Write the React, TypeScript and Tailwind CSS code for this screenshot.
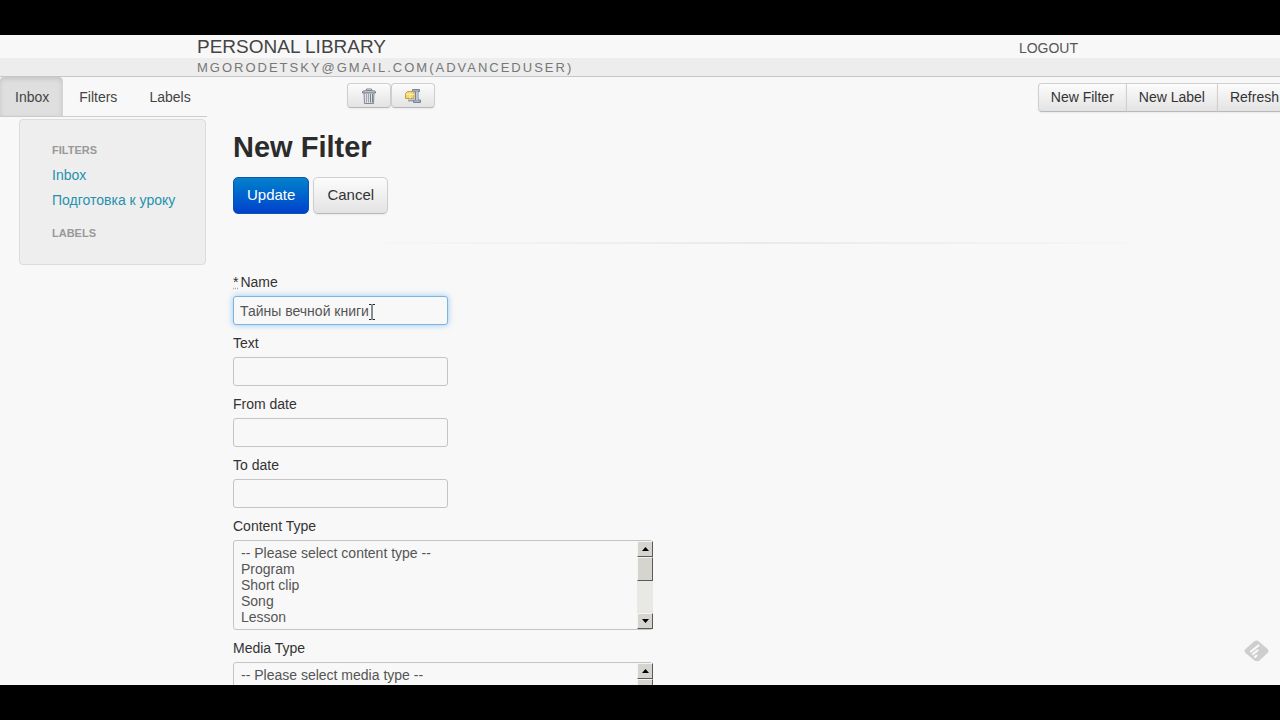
import type { ReactNode } from "react";

const TABS = ["Inbox", "Filters", "Labels"];
const FILTERS = ["Inbox", "Подготовка к уроку"];
const ACTIONS = ["New Filter", "New Label", "Refresh"];

const CONTENT_TYPES = ["-- Please select content type --", "Program", "Short clip", "Song", "Lesson"];
const MEDIA_TYPES = ["-- Please select media type --"];

const silverButton =
  "border border-[#cfcfcf] border-b-[#b8b8b8] bg-linear-to-b from-[#fcfcfc] to-[#e3e3e3] text-[#333] shadow-[0_1px_2px_rgba(0,0,0,0.06)]";

function TrashIcon() {
  return (
    <svg width="16" height="16" viewBox="0 0 16 16" fill="none" aria-hidden="true">
      <path d="M5.5 2.5V1h5v1.5" stroke="#7c8088" />
      <path d="M1.500 5V3.500C1.500 2.200 14.500 2.200 14.500 3.500V5z" fill="#c3c7cf" stroke="#7c8088" />
      <path d="M3 5h10l-.5 10.500h-9z" fill="#dde0e7" stroke="#858992" />
      <path d="M5.5 6v8.500M7.500 6v8.500" stroke="#a0a4ad" />
      <path d="M9.500 6v8.500M11.500 6v8.500" stroke="#7c808a" />
    </svg>
  );
}

function ArchiveIcon() {
  return (
    <svg width="18" height="16" viewBox="0 0 18 16" fill="none" aria-hidden="true">
      <path d="M8.500 1.500h7v2h-1.500v8.500h2.500v2.500h-7V12h2V3.500h-3z" fill="#a5afc3" stroke="#78829a" />
      <path d="M13 4v8" stroke="#dce2ee" />
      <path d="M1.500 5.500l2-2h6.500v7H1.500z" fill="#f3d568" stroke="#c0a048" />
      <path d="M2 6.500h8M6 4v6.500" stroke="#fff1a8" />
      <path d="M4 12.500h5" stroke="#9aa4b8" strokeWidth="2" />
    </svg>
  );
}

function ArrowButton({ down = false }: { down?: boolean }) {
  return (
    <span className="flex h-4 w-4 shrink-0 items-center justify-center border border-t-[#f4f4f0] border-r-[#5a5a5a] border-b-[#5a5a5a] border-l-[#f4f4f0] bg-[#d6d4ce]">
      <svg width="7" height="4" viewBox="0 0 7 4" aria-hidden="true">
        <path d={down ? "M0 0h7L3.5 4z" : "M0 4h7L3.5 0z"} fill="#000" />
      </svg>
    </span>
  );
}

function ListBox({ id, label, options }: { id: string; label: string; options: string[] }) {
  return (
    <Field id={id} label={label}>
      <div className="relative w-full max-w-[420px]">
        <select
          id={id}
          size={5}
          className="block h-[90px] w-full overflow-y-scroll rounded-[3px] border border-[#c4c4c4] bg-[#f8f8f8] px-[5px] py-1 text-sm text-[#555] outline-none [scrollbar-width:none]"
        >
          {options.map((option) => (
            <option key={option} className="h-4 min-h-0 px-0.5 py-0 leading-4">
              {option}
            </option>
          ))}
        </select>
        <div className="pointer-events-none absolute inset-y-px right-0 flex w-4 flex-col bg-[#e8e8e4]">
          <ArrowButton />
          <span className="h-6 w-4 shrink-0 border border-t-[#f4f4f0] border-r-[#5a5a5a] border-b-[#5a5a5a] border-l-[#f4f4f0] bg-[#d6d4ce]" />
          <span className="flex-1" />
          <ArrowButton down />
        </div>
      </div>
    </Field>
  );
}

function Field({ id, label, required, children }: { id: string; label: string; required?: boolean; children: ReactNode }) {
  return (
    <div className="mb-2 flex flex-col gap-1">
      <label htmlFor={id} className="text-sm leading-5 text-[#333]">
        {required && <abbr title="required" className="mr-0.5 underline decoration-[#aaa] decoration-dotted">*</abbr>}
        {label}
      </label>
      {children}
    </div>
  );
}

function TextField({ id, label }: { id: string; label: string }) {
  return (
    <Field id={id} label={label}>
      <input
        id={id}
        type="text"
        className="h-[29px] w-[215px] rounded-[3px] border border-[#c4c4c4] bg-[#f8f8f8] px-1.5 text-sm text-[#555]"
      />
    </Field>
  );
}

function Header() {
  return (
    <header className="shrink-0 border-b border-[#c6c6c6] bg-linear-to-b from-[#f8f8f8] from-[23px] to-[#ededed] to-[23px]">
      <div className="mx-auto flex w-full max-w-[886px] items-start justify-between">
        <div>
          <h1 className="text-[19px] leading-[23px] text-[#444]">PERSONAL LIBRARY</h1>
          <p className="h-[18px] text-[13px] leading-5 tracking-[2px] text-[#777]">MGORODETSKY@GMAIL.COM(ADVANCEDUSER)</p>
        </div>
        <a href="#logout" className="pr-[5px] text-sm leading-[27px] text-[#555]">LOGOUT</a>
      </div>
    </header>
  );
}

function Toolbar() {
  return (
    <div className="flex shrink-0 items-start">
      <nav className="mr-[140px] flex w-[207px] shrink-0 border-b border-[#ccc]">
        {TABS.map((tab, i) => (
          <a
            key={tab}
            href={"#" + tab.toLowerCase()}
            className={
              i === 0
                ? "rounded-t border-r border-[#d5d5d5] bg-[#dfdfdf] pt-0.5 pr-[13px] pl-[15px] text-sm leading-[37px] text-[#444] shadow-[inset_0_2px_5px_rgba(0,0,0,0.12)]"
                : "px-4 pt-0.5 text-sm leading-[37px] text-[#444]"
            }
          >
            {tab}
          </a>
        ))}
      </nav>
      <div className="mt-1.5 flex">
        <button aria-label="Delete" className={"flex h-[25px] w-11 items-center justify-center rounded " + silverButton}>
          <TrashIcon />
        </button>
        <button aria-label="Archive" className={"flex h-[25px] w-11 items-center justify-center rounded " + silverButton}>
          <ArchiveIcon />
        </button>
      </div>
      <div className="mt-1.5 -mr-3 ml-auto flex shrink-0">
        {ACTIONS.map((action) => (
          <button key={action} className={"-ml-px h-[29px] px-3 pb-0.5 text-sm first:rounded-l last:rounded-r " + silverButton}>
            {action}
          </button>
        ))}
      </div>
    </div>
  );
}

function Sidebar() {
  return (
    <aside className="mt-0.5 ml-[19px] w-[187px] shrink-0 self-start rounded border border-[#dcdcdc] bg-[#eee] px-8 pt-[19px] pb-5">
      <h2 className="mb-0.5 text-[11px] leading-[22px] font-bold text-[#999]">FILTERS</h2>
      <ul>
        {FILTERS.map((filter) => (
          <li key={filter}>
            <a href="#filter" className="block text-sm leading-[25px] whitespace-nowrap text-[#2591ae]">{filter}</a>
          </li>
        ))}
      </ul>
      <h2 className="mt-[9px] text-[11px] leading-[22px] font-bold text-[#999]">LABELS</h2>
    </aside>
  );
}

function FilterForm() {
  return (
    <main className="ml-[27px] min-w-0 flex-1 pt-3">
      <h2 className="text-[29px] leading-9 font-bold text-[#2b2b2b]">New Filter</h2>
      <form>
        <div className="mt-3 flex gap-1">
          <button
            type="button"
            className="h-[37px] rounded-[5px] border border-[#0a55b0] bg-linear-to-b from-[#0a80cc] to-[#0440cc] px-[13px] pb-px text-[15px] text-white"
          >
            Update
          </button>
          <button type="button" className={"h-[37px] rounded-[5px] px-[13px] pb-px text-[15px] " + silverButton}>
            Cancel
          </button>
        </div>
        <hr className="mx-auto my-7 h-0.5 w-[71%] border-0 bg-linear-to-r from-[#f6f6f6] via-[#eaeaea] to-[#f6f6f6]" />
        <Field id="name" label="Name" required>
          <div className="relative">
            <input
              id="name"
              type="text"
              defaultValue="Тайны вечной книги"
              className="block h-[29px] w-[215px] rounded-[3px] border border-[#7db3e0] bg-[#f8f8f8] px-1.5 text-sm text-[#555] shadow-[0_0_6px_rgba(82,168,236,0.6)] outline-none"
            />
            <svg className="pointer-events-none absolute top-2 left-[135px]" width="8" height="16" viewBox="0 0 8 16" aria-hidden="true">
              <path d="M1 .5h2.5M4.5 .5H7M4 1v14M1 15.5h2.5M4.5 15.5H7" stroke="#222" fill="none" />
            </svg>
          </div>
        </Field>
        <TextField id="text" label="Text" />
        <TextField id="from-date" label="From date" />
        <TextField id="to-date" label="To date" />
        <ListBox id="content-type" label="Content Type" options={CONTENT_TYPES} />
        <ListBox id="media-type" label="Media Type" options={MEDIA_TYPES} />
      </form>
    </main>
  );
}

export default function App() {
  return (
    <div className="h-screen bg-black py-[35px] font-['Liberation_Sans',Arial,sans-serif]">
      <div className="relative flex h-full flex-col overflow-hidden bg-[#f8f8f8]">
        <Header />
        <Toolbar />
        <div className="flex min-h-0 flex-1">
          <Sidebar />
          <FilterForm />
        </div>
        <svg className="absolute right-[11px] bottom-[23px]" width="25" height="22" viewBox="0 0 25 22" aria-hidden="true">
          <path d="M10 1.5q2.5-2 5 0l8.500 7.500q2 2 0 4l-8 7.500q-2 1.500-5 0L1.500 13q-2-2 0-4z" fill="#cecece" />
          <path d="M7 11.500l7.500-6M9 14l4.500-3.500M11 16.800l1.500-1.200" stroke="#fafafa" strokeWidth="2.200" strokeLinecap="round" />
        </svg>
      </div>
    </div>
  );
}
